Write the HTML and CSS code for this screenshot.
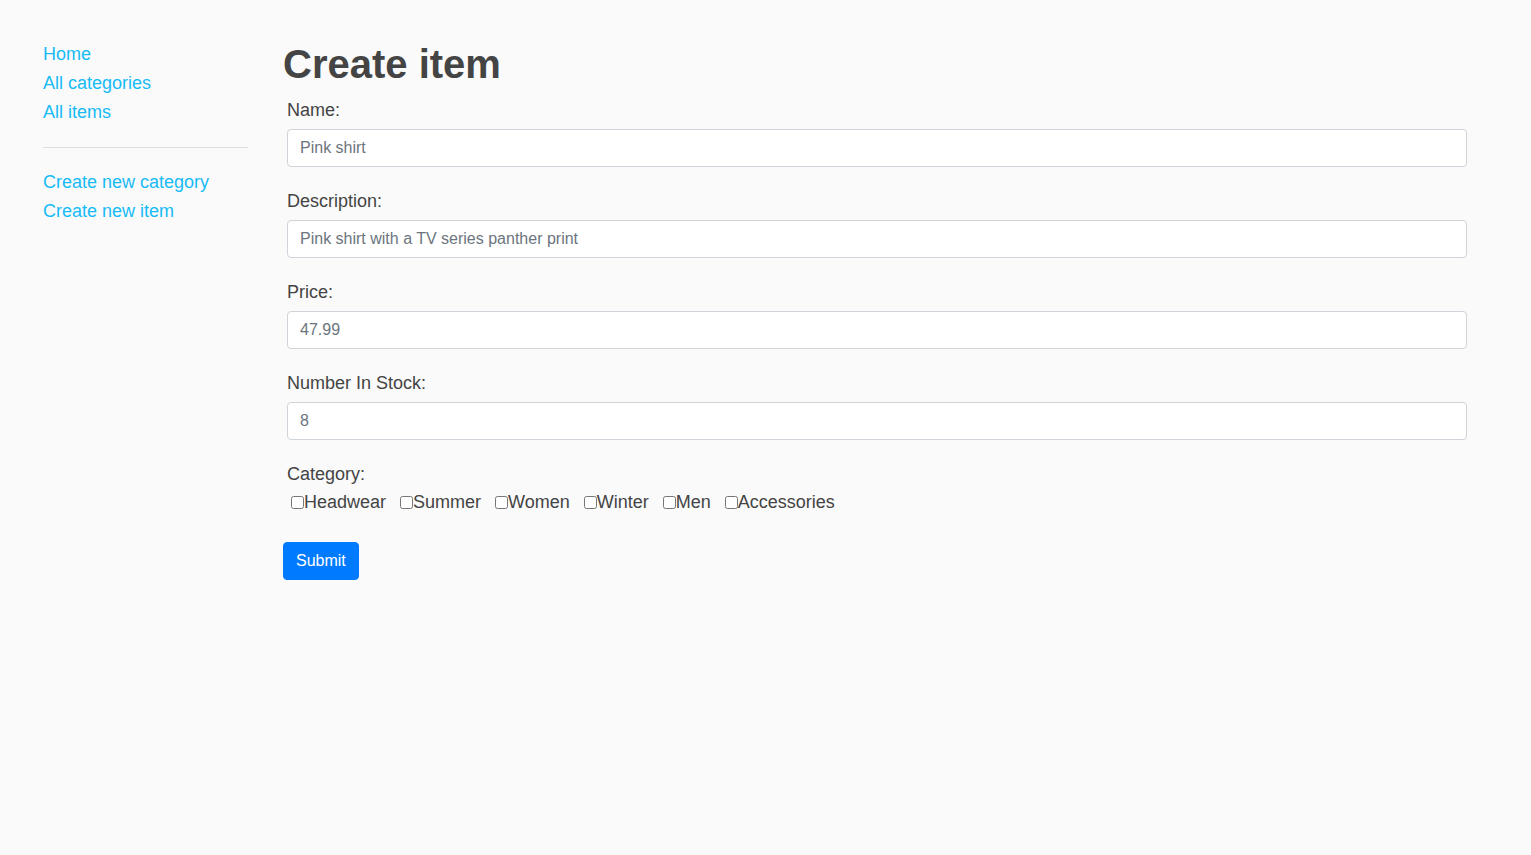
FILE: index.html
```html
<!DOCTYPE html>
<html lang="en">
<head>
<meta charset="utf-8">
<title>Create item</title>
<link rel="stylesheet" href="styles.css">
</head>
<body>
<div class="page">
  <nav class="sidebar">
    <ul class="nav-list">
      <li><a href="#">Home</a></li>
      <li><a href="#">All categories</a></li>
      <li><a href="#">All items</a></li>
    </ul>
    <hr class="divider">
    <ul class="nav-list">
      <li><a href="#">Create new category</a></li>
      <li><a href="#">Create new item</a></li>
    </ul>
  </nav>
  <main class="content">
    <h1 class="title">Create item</h1>
    <form class="form">
      <div class="form-group">
        <label class="label" for="name">Name:</label>
        <input class="input" id="name" type="text" placeholder="Pink shirt">
      </div>
      <div class="form-group">
        <label class="label" for="desc">Description:</label>
        <input class="input" id="desc" type="text" placeholder="Pink shirt with a TV series panther print">
      </div>
      <div class="form-group">
        <label class="label" for="price">Price:</label>
        <input class="input" id="price" type="text" placeholder="47.99">
      </div>
      <div class="form-group">
        <label class="label" for="stock">Number In Stock:</label>
        <input class="input" id="stock" type="text" placeholder="8">
      </div>
      <div class="form-group">
        <div class="label label-tight">Category:</div>
        <div class="checks">
          <span class="check"><input type="checkbox" id="c1"><label for="c1">Headwear</label></span>
          <span class="check"><input type="checkbox" id="c2"><label for="c2">Summer</label></span>
          <span class="check"><input type="checkbox" id="c3"><label for="c3">Women</label></span>
          <span class="check"><input type="checkbox" id="c4"><label for="c4">Winter</label></span>
          <span class="check"><input type="checkbox" id="c5"><label for="c5">Men</label></span>
          <span class="check"><input type="checkbox" id="c6"><label for="c6">Accessories</label></span>
        </div>
      </div>
      <button class="btn" type="button">Submit</button>
    </form>
  </main>
</div>
</body>
</html>
```
FILE: styles.css
```css
html, body {
  margin: 0;
  padding: 0;
}
body {
  background: #fafafa;
  color: #444444;
  font-family: "Liberation Sans", Arial, sans-serif;
  font-size: 18px;
  line-height: 1.6;
}
.page {
  display: flex;
  padding: 39px 60px 40px 43px;
  gap: 35px;
}
.sidebar {
  width: 205px;
  flex: none;
  padding-top: 1px;
}
.nav-list {
  list-style: none;
  margin: 0;
  padding: 0;
}
.nav-list a {
  color: #17bbf6;
  text-decoration: none;
}
.divider {
  border: 0;
  border-top: 1px solid #dddddd;
  margin: 21px 0 20px;
}
.content {
  flex: 1;
  min-width: 0;
}
.title {
  font-size: 40px;
  font-weight: bold;
  line-height: 48px;
  margin: 1px 0 8px;
  color: #444444;
}
.form {
  margin: 0;
}
.form-group {
  padding: 0 4px;
  margin-bottom: 20px;
}
.label {
  display: block;
  height: 29px;
  margin-bottom: 4px;
}
.label-tight {
  height: 28px;
  margin-bottom: 0;
}
.input {
  display: block;
  box-sizing: border-box;
  width: 100%;
  height: 38px;
  padding: 6px 12px;
  font-family: inherit;
  font-size: 16px;
  line-height: 1.5;
  color: #495057;
  background: #ffffff;
  border: 1px solid #ced4da;
  border-radius: 4px;
}
.input::placeholder {
  color: #6c757d;
  opacity: 1;
}
.checks {
  display: flex;
  gap: 10px;
  height: 29px;
}
.check {
  display: inline-flex;
  align-items: center;
}
.check input {
  margin: 3px 0 3px 4px;
  width: 13px;
  height: 13px;
}
.btn {
  display: inline-block;
  margin-top: 5px;
  height: 38px;
  padding: 6px 12px;
  font-family: inherit;
  font-size: 16px;
  line-height: 1.5;
  color: #ffffff;
  background: #007bff;
  border: 1px solid #007bff;
  border-radius: 4px;
}
```
